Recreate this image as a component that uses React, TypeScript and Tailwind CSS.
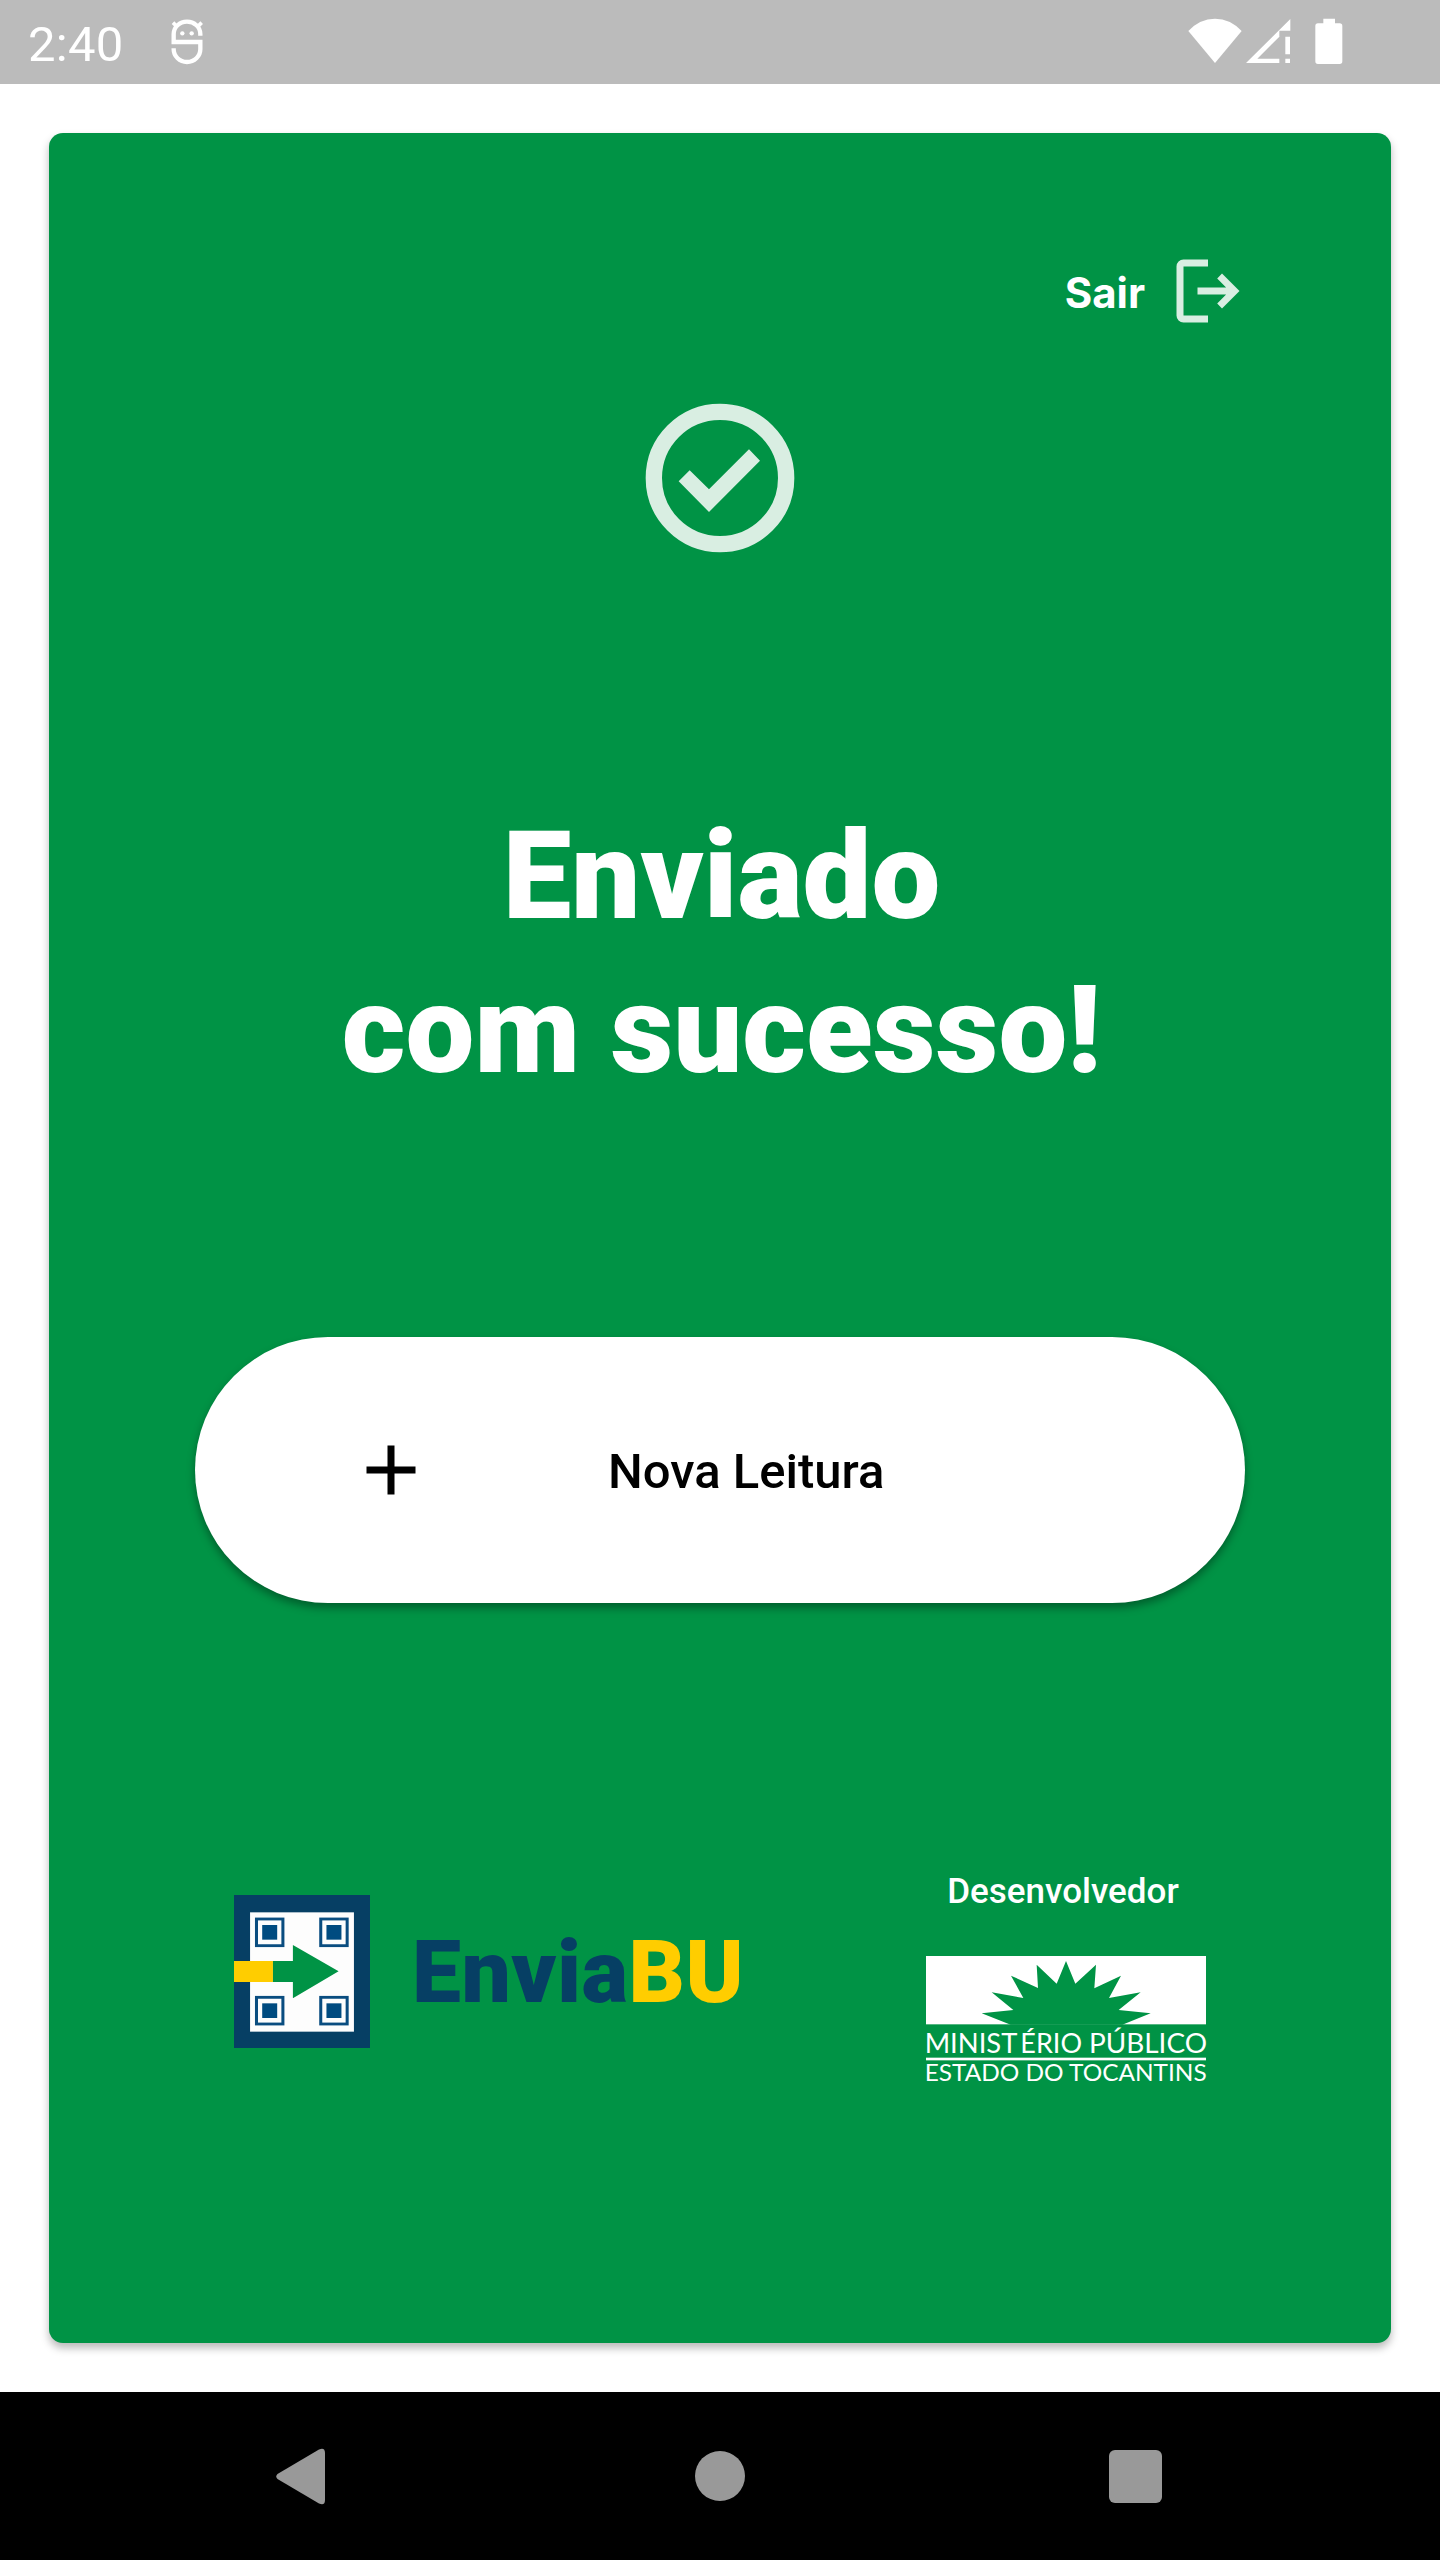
// App.tsx
import React from "react";

const MarkerIcon: React.FC<{ x: number; y: number }> = ({ x, y }) => (
  <g>
    <rect x={x + 4} y={y + 4} width="74" height="80" fill="none" stroke="#0a4d80" strokeWidth="8.5" />
    <rect x={x + 20} y={y + 22} width="42" height="44" fill="#004b80" />
  </g>
);

const StatusBar: React.FC = () => (
  <header className="h-[84px] bg-[#bbbbbb] flex items-center shrink-0">
    <span className="ml-[28px] mt-[4px] w-[143px] text-[49px] leading-none tracking-[0.3px] text-white">2:40</span>
    <svg className="w-[32px] h-[46px]" viewBox="514 58 96 138">
      <g fill="none" stroke="#fff" strokeWidth="13">
        <path d="M602 108V103a40 37 0 0 0-80 0V127H602V149a40 38 0 0 1-80 0V146" />
        <path d="M520 69l13 13M606 69l-13 13" strokeWidth="11" />
      </g>
      <circle cx="548" cy="101" r="6.5" fill="#fff" />
      <circle cx="576" cy="101" r="6.5" fill="#fff" />
    </svg>
    <svg className="ml-auto mr-[97px] w-[155px] h-[48px]" viewBox="83 55 465 144" fill="#fff">
      <path d="M164 190L84 94Q118 57 164 57T244 94Z" />
      <path fillRule="evenodd" d="M390 58V93H357V190H257ZM357 111L291 177H357Z" />
      <path d="M375 111H389V164H375ZM375 177H389V190H375Z" />
      <path d="M489 57H524V71H538Q546 71 546 79V185Q546 193 538 193H473Q465 193 465 185V79Q465 71 473 71H489Z" />
    </svg>
  </header>
);

const NavBar: React.FC = () => (
  <nav className="h-[168px] bg-black flex shrink-0 items-center">
    <svg className="ml-[276px] w-[49px] h-[57px]" viewBox="0 0 49 57" fill="#999">
      <path d="M1.5 26L43 1.5Q49-1 49 5V52Q49 58 43 55.5L1.5 31Q-1 28.500 1.500 26Z" />
    </svg>
    <div className="ml-[370px] size-[50px] rounded-full bg-[#999]" />
    <div className="ml-[364px] w-[53px] h-[53px] rounded-[6px] bg-[#999]" />
  </nav>
);

const EnviaLogo: React.FC = () => (
  <div className="flex items-center h-[153px]">
    <svg className="w-[136px] h-[153px]" viewBox="67 75 381 459" preserveAspectRatio="none">
      <rect x="67" y="75" width="381" height="459" fill="#063f64" />
      <rect x="112" y="127" width="291" height="358" fill="#fdfdfd" />
      <MarkerIcon x={126} y={143} />
      <MarkerIcon x={306} y={143} />
      <MarkerIcon x={126} y={378} />
      <MarkerIcon x={306} y={378} />
      <path d="M175 273H232V225L360 304L232 385V336H175Z" fill="#009345" />
      <rect x="67" y="273" width="109" height="63" fill="#ffcd00" />
    </svg>
    <span className="ml-[42px] text-[87.5px] leading-[104px] tracking-[0.5px] font-black text-[#063f64]">
      Envia<span className="text-[#ffcd00]">BU</span>
    </span>
  </div>
);

const MinisterioLogo: React.FC = () => (
  <svg className="mt-[43px] w-[280px] h-[126px] overflow-visible" viewBox="78 317 840 378">
    <rect x="78" y="317" width="840" height="205" fill="#fff" />
    <path
      d="M332 523L245 489L340 479L275 426L370 443L333 376L414 413L410 343L470 400L498 332L526 400L588 343L583 414L663 376L627 443L722 426L656 479L752 489L667 523Z"
      fill="#009345"
    />
    <g fill="#fff" style={{ fontFamily: "Lato, sans-serif" }}>
      <text x="74" y="607" fontSize="82" textLength="278" lengthAdjust="spacingAndGlyphs">MINIST</text>
      <text x="361" y="607" fontSize="82" textLength="185" lengthAdjust="spacingAndGlyphs">ÉRIO</text>
      <text x="567" y="607" fontSize="82" textLength="354" lengthAdjust="spacingAndGlyphs">PÚBLICO</text>
      <rect x="78" y="622" width="840" height="8" />
      <text x="74" y="692" fontSize="69" textLength="846" lengthAdjust="spacingAndGlyphs">ESTADO DO TOCANTINS</text>
    </g>
  </svg>
);

const App: React.FC = () => {
  return (
    <div className="w-[1440px] h-[2560px] flex flex-col bg-white font-[Roboto,sans-serif]">
      <StatusBar />

      <main className="flex-1 p-[49px]">
        <section className="h-full rounded-[14px] bg-[#009345] flex flex-col items-center shadow-[0_5px_8px_rgba(0,0,0,0.28)]">
          <div className="mt-[116px] w-full h-[84px] flex items-center justify-end pr-[141px]">
            <span className="mt-[4px] text-[42px] leading-none font-bold text-white font-[Inter,sans-serif]">Sair</span>
            <svg className="ml-[21px] size-[84px]" viewBox="0 0 24 24" fill="#d9eee2">
              <path d="M5 21q-.825 0-1.413-.587T3 19V5q0-.825.587-1.413T5 3h7v2H5v14h7v2H5Zm11-4-1.375-1.45 2.55-2.55H9v-2h8.175l-2.55-2.55L16 7l5 5-5 5Z" />
            </svg>
          </div>

          <svg className="mt-[70px] size-[150px]" viewBox="76 70 450 450">
            <circle cx="301" cy="295" r="198.500" fill="none" stroke="#d9eee2" strokeWidth="49" />
            <path d="M177 305L210 272L268 329L388 209L421 243L268 397Z" fill="#d9eee2" />
          </svg>

          <h1 className="mt-[246px] ml-[3px] text-[122.5px] leading-[154px] font-black text-white text-center">
            Enviado
            <br />
            com sucesso!
          </h1>

          <button className="mt-[230px] w-[1050px] h-[266px] shrink-0 rounded-full bg-white flex items-center pl-[154px] shadow-[0_5px_9px_rgba(0,0,0,0.35)]">
            <svg className="size-[84px]" viewBox="0 0 24 24">
              <path d="M19 13h-6v6h-2v-6H5v-2h6V5h2v6h6z" />
            </svg>
            <span className="ml-[175px] mt-[4px] text-[49px] font-medium text-black">Nova Leitura</span>
          </button>

          <footer className="mt-[268px] w-full flex items-start justify-between pl-[185px] pr-[185px]">
            <div className="mt-[24px]">
              <EnviaLogo />
            </div>
            <div className="flex flex-col items-center">
              <span className="text-[35px] leading-[42px] font-medium text-white -translate-x-[3px]">Desenvolvedor</span>
              <MinisterioLogo />
            </div>
          </footer>
        </section>
      </main>

      <NavBar />
    </div>
  );
};

export default App;
